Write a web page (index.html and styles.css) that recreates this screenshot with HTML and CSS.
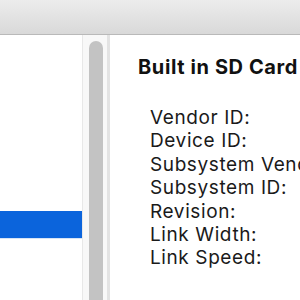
FILE: index.html
```html
<!DOCTYPE html>
<html>
<head>
<meta charset="utf-8">
<link rel="stylesheet" href="styles.css">
</head>
<body>
<div class="window">
  <div class="toolbar"></div>
  <div class="main">
    <div class="sidebar">
      <div class="row selected"></div>
    </div>
    <div class="scrolltrack"><div class="thumb"></div></div>
    <div class="detail">
      <div class="heading">Built in SD Card</div>
      <div class="props">
        <div class="prop">Vendor ID:</div>
        <div class="prop">Device ID:</div>
        <div class="prop">Subsystem Vendor ID:</div>
        <div class="prop">Subsystem ID:</div>
        <div class="prop">Revision:</div>
        <div class="prop">Link Width:</div>
        <div class="prop">Link Speed:</div>
      </div>
    </div>
  </div>
</div>
</body>
</html>
```
FILE: styles.css
```css
html, body {
  margin: 0;
  padding: 0;
  width: 300px;
  height: 300px;
  overflow: hidden;
  background: #fff;
}
.window {
  width: 300px;
  height: 300px;
  display: flex;
  flex-direction: column;
  font-family: Inter, "Liberation Sans", sans-serif;
  color: #1a1a1a;
}
.toolbar {
  height: 34px;
  flex: none;
  background: linear-gradient(#ececec, #d9d9d9);
  border-bottom: 1px solid #b9b9b9;
}
.main {
  flex: 1;
  display: flex;
  min-height: 0;
}
.sidebar {
  width: 82px;
  flex: none;
  padding-top: 176px;
  box-sizing: border-box;
}
.row.selected {
  height: 27px;
  background: #0b64dc;
  border-bottom: 1px solid #d6e4f6;
}
.scrolltrack {
  width: 28px;
  flex: none;
  box-sizing: border-box;
  background: #f8f8f8;
  border-left: 1px solid #e8e8e8;
  border-right: 3px solid #e3e3e3;
  padding: 6px 4px 0 6px;
  overflow: hidden;
}
.thumb {
  width: 14px;
  height: 400px;
  background: #c3c3c3;
  border-radius: 7px;
}
.detail {
  flex: 1;
  min-width: 0;
  padding: 20px 0 0 28px;
  white-space: nowrap;
  overflow: hidden;
}
.heading {
  font-weight: 700;
  font-size: 20px;
  line-height: 24px;
  letter-spacing: 0.6px;
  color: #111;
}
.props {
  margin-top: 27px;
  padding-left: 12px;
}
.prop {
  font-size: 19px;
  line-height: 23.4px;
  letter-spacing: 0.6px;
}
```
